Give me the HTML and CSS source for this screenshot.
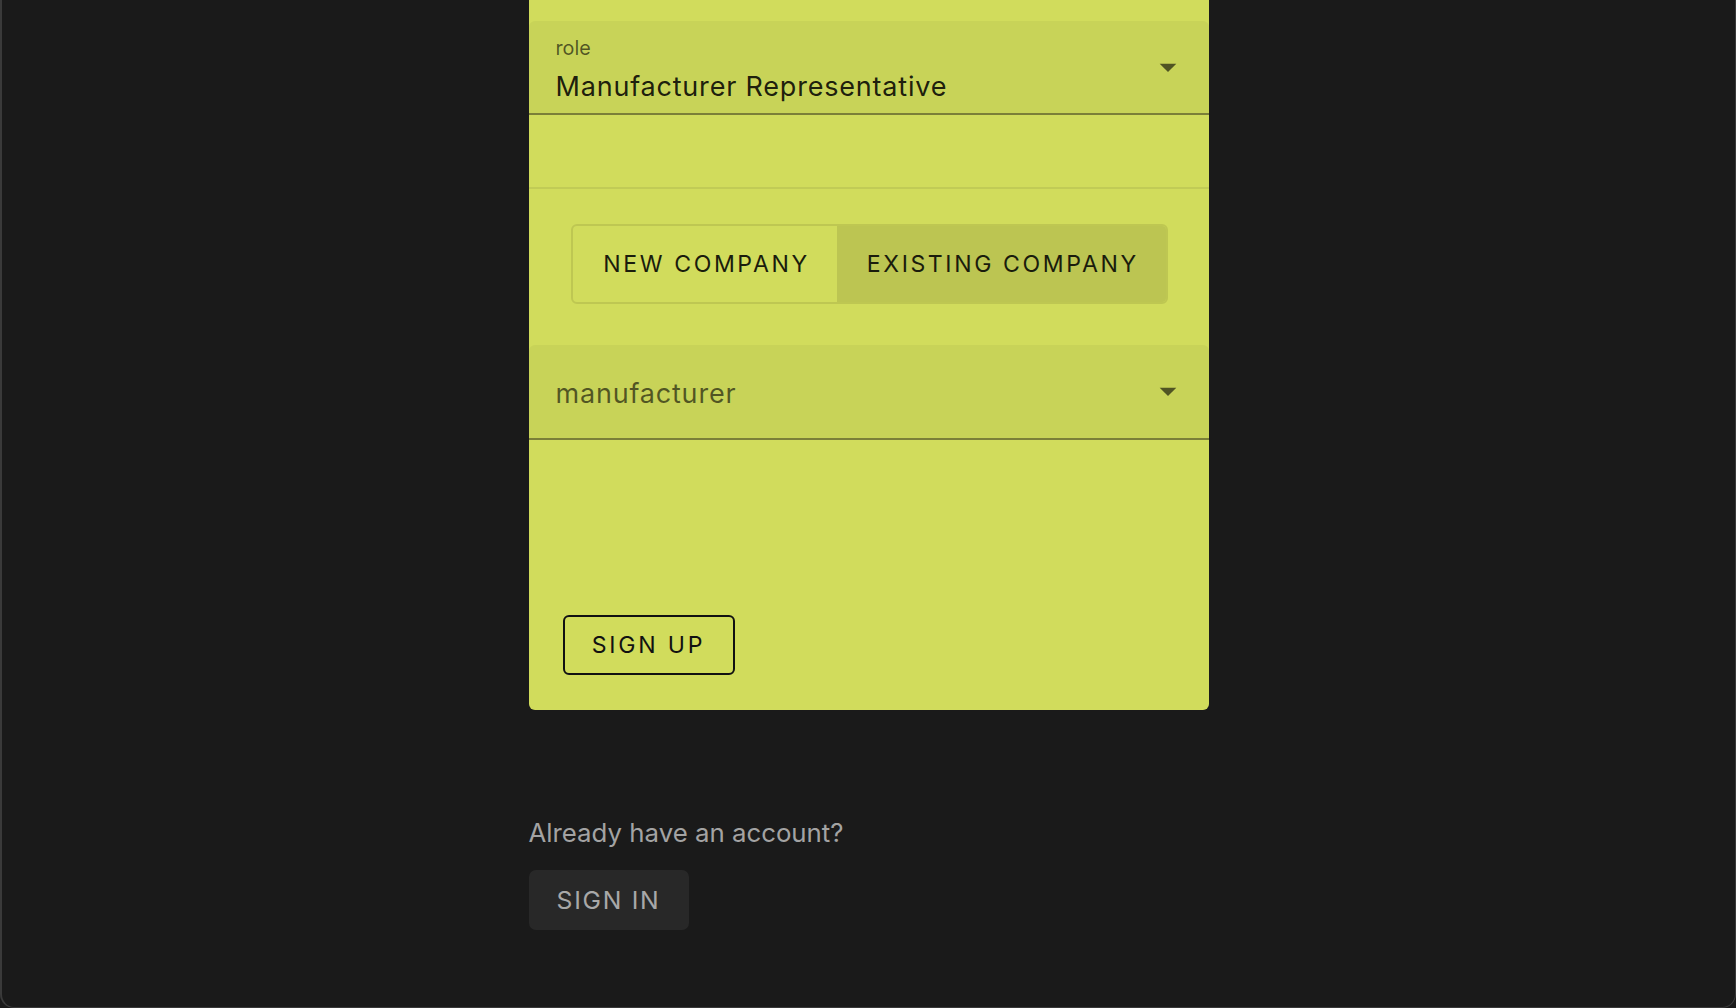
FILE: index.html
```html
<!DOCTYPE html>
<html lang="en">
<head>
<meta charset="utf-8">
<title>Sign up</title>
<link rel="stylesheet" href="styles.css">
</head>
<body>
<div class="frame">
  <main class="column">
    <form class="card">
      <div class="field field-labeled">
        <span class="field-label">role</span>
        <span class="field-value">Manufacturer Representative</span>
        <svg class="field-icon" viewBox="0 0 24 24" aria-hidden="true"><path d="M7 10l5 5 5-5z"/></svg>
      </div>
      <div class="spacer-field"></div>
      <div class="toggle-wrap">
        <div class="toggle-group">
          <button type="button" class="toggle">New company</button>
          <button type="button" class="toggle toggle-selected">Existing company</button>
        </div>
      </div>
      <div class="field field-plain">
        <span class="field-placeholder">manufacturer</span>
        <svg class="field-icon" viewBox="0 0 24 24" aria-hidden="true"><path d="M7 10l5 5 5-5z"/></svg>
      </div>
      <div class="actions">
        <button type="button" class="btn-outline">Sign up</button>
      </div>
    </form>
    <section class="signin">
      <p class="signin-text">Already have an account?</p>
      <button type="button" class="btn-dark">Sign in</button>
    </section>
  </main>
</div>
</body>
</html>
```
FILE: styles.css
```css
* { box-sizing: border-box; }
html, body {
  margin: 0;
  padding: 0;
  background: #1a1a1a;
  font-family: Inter, "Noto Sans", sans-serif;
}
body { height: 1008px; overflow: hidden; }

.frame {
  height: 1008px;
  border-left: 2px solid #3a3a3a;
  border-right: 1px solid #3a3a3a;
  border-bottom: 1px solid #3a3a3a;
  border-radius: 0 0 14px 14px;
  background: #1a1a1a;
}

.column {
  width: 680px;
  margin: 0 auto;
}

.card {
  background: #d1dc5c;
  border-radius: 0 0 6px 6px;
  padding: 21px 0 35px;
  display: flex;
  flex-direction: column;
}

.field {
  position: relative;
  background: #c8d358;
  border-radius: 6px 6px 0 0;
  border-bottom: 2px solid #7b7f38;
  padding-left: 27px;
  display: flex;
  flex-direction: column;
}
.field-labeled { padding-top: 15px; padding-bottom: 7px; }
.field-plain { padding-top: 30px; padding-bottom: 25px; }

.field-label {
  font-size: 19.8px;
  line-height: 24px;
  color: rgba(0, 0, 0, 0.6);
  margin-bottom: 8px;
}
.field-value {
  font-size: 27px;
  line-height: 38px;
  color: rgba(0, 0, 0, 0.87);
  letter-spacing: 0.8px;
}
.field-placeholder {
  font-size: 27px;
  line-height: 38px;
  color: rgba(0, 0, 0, 0.6);
  letter-spacing: 0.8px;
}
.field-icon {
  position: absolute;
  right: 21px;
  top: 26px;
  width: 40px;
  height: 40px;
  fill: rgba(0, 0, 0, 0.6);
}

.spacer-field {
  height: 74px;
  border-bottom: 2px solid #c1cb56;
}

.toggle-wrap {
  display: flex;
  justify-content: center;
  padding: 35px 0 41px;
}
.toggle-group {
  display: flex;
  border: 2px solid #bec752;
  border-radius: 6px;
  overflow: hidden;
  margin-left: 2px;
}
.toggle {
  font-family: Inter, "Noto Sans", sans-serif;
  font-size: 23.1px;
  font-weight: 400;
  letter-spacing: 2.6px;
  text-transform: uppercase;
  color: #1a1c0c;
  background: transparent;
  border: 0;
  height: 76px;
  padding: 0 27px 0 30px;
  margin: 0;
}
.toggle-selected { background: #bcc552; }

.actions {
  padding: 175px 0 0 34px;
  display: flex;
}
.btn-outline {
  font-family: Inter, "Noto Sans", sans-serif;
  font-size: 23.1px;
  font-weight: 400;
  letter-spacing: 2.8px;
  text-transform: uppercase;
  color: #111;
  background: transparent;
  border: 2px solid #111;
  border-radius: 6px;
  height: 60px;
  width: 172px;
  padding: 0;
}

.signin {
  padding-top: 103px;
}
.signin-text {
  margin: 0 0 17px;
  font-size: 25.8px;
  line-height: 40px;
  color: #a3a3a3;
}
.btn-dark {
  font-family: Inter, "Noto Sans", sans-serif;
  font-size: 24.75px;
  letter-spacing: 1.7px;
  text-transform: uppercase;
  color: #a8a8a8;
  background: #282828;
  border: 0;
  border-radius: 7px;
  width: 160px;
  height: 60px;
  padding: 0;
}
```
